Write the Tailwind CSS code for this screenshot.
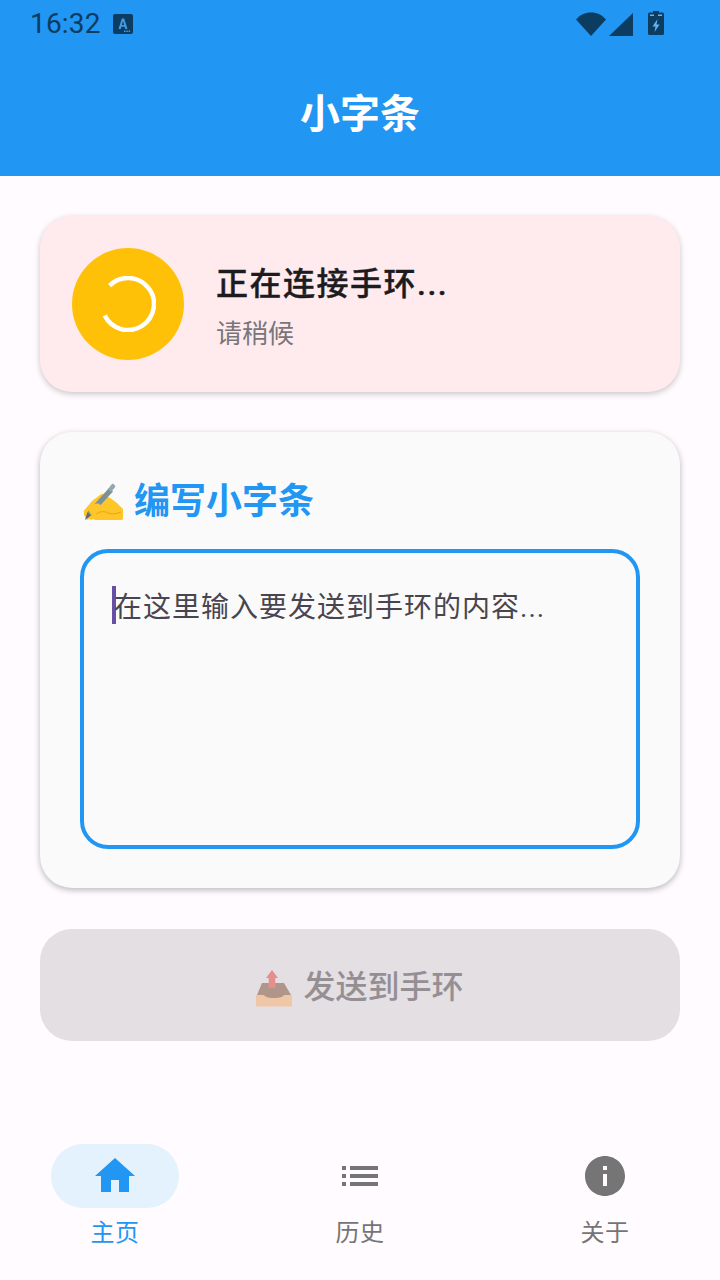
<!DOCTYPE html>
<html lang="zh">
<head>
  <meta charset="UTF-8" />
  <meta name="viewport" content="width=device-width, initial-scale=1.0" />
  <title>小字条</title>
  <script src="https://cdn.jsdelivr.net/npm/@tailwindcss/browser@4"></script>
</head>
<body class="w-[720px] h-[1280px] overflow-hidden flex flex-col bg-[#FFFBFE] font-['Roboto','Noto_Sans_CJK_SC',sans-serif]">
  <!-- app bar -->
  <header class="h-[176px] bg-[#2196F3] flex flex-col shrink-0">
    <div class="h-[48px] flex items-center pl-[30px] pr-[56px] text-[#0D3C61]">
      <span class="text-[28px] leading-[48px] font-['Roboto'] tracking-[0.2px]">16:32</span>
      <svg class="ml-[12px]" width="20" height="20" viewBox="0 0 20 20">
        <rect width="20" height="20" rx="2" fill="#0D3C61"/>
        <path d="M5.500 15 8.800 4.500h2.400L14.500 15h-2.300l-.6-2.200H8.400L7.800 15zM8.900 10.900h2.200L10 7z" fill="#3F9BE4"/>
        <path d="M11 16.500h1.500V18H11zm2.300 0h1.500V18h-1.500zm2.300 0h1.500V18h-1.500z" fill="#3F9BE4"/>
      </svg>
      <div class="ml-auto flex items-center">
        <svg width="30" height="24" viewBox="0 0 30 24"><path d="M0 7.500C4 3 9 .500 15 .500S26 3 30 7.500L15 24z" fill="#0D3C61"/></svg>
        <svg class="ml-[3px]" width="24" height="24" viewBox="0 0 24 24"><path d="M24 1v23H0z" fill="#0D3C61"/></svg>
        <svg class="ml-[15px] -mt-[2px]" width="16" height="24" viewBox="0 0 16 24">
          <path d="M5 0h6v1.500h3.500A1.500 1.500 0 0 1 16 3v19.500a1.500 1.500 0 0 1-1.500 1.500h-13A1.500 1.500 0 0 1 0 22.500V3a1.500 1.500 0 0 1 1.500-1.500H5z" fill="#0D3C61"/>
          <path d="M9.500 8 4.500 15.500h3L6.500 21l5-7.500h-3z" fill="#5FB4F6"/>
          <path d="M2 3.500h4v1.500H2zm8 0h4v1.500h-4z" fill="#5FB4F6"/>
        </svg>
      </div>
    </div>
    <h1 class="h-[80px] mt-[27px] flex items-center justify-center text-white text-[40px] font-bold leading-none">小字条</h1>
  </header>

  <main class="flex-1 px-[40px] pt-[40px] flex flex-col">
    <!-- status card -->
    <section class="h-[176px] shrink-0 rounded-[32px] bg-[#FFEBEE] p-[32px] flex items-center shadow-[0_2px_6px_rgba(0,0,0,0.22)]">
      <div class="w-[112px] h-[112px] rounded-full bg-[#FFC107] flex items-center justify-center">
        <svg width="56" height="56" viewBox="0 0 56 56"><path d="M9.600 9.600A26 26 0 1 1 4.700 39.600" fill="none" stroke="#fff" stroke-width="4.500"/></svg>
      </div>
      <div class="ml-[32px] pt-[5px] flex flex-col">
        <div class="text-[32px] leading-[44px] tracking-[1.5px] font-medium [-webkit-text-stroke:0.4px] text-[#1C1B1F]">正在连接手环...</div>
        <div class="text-[26px] leading-[36px] mt-[10px] text-[#79767A]">请稍候</div>
      </div>
    </section>

    <!-- editor card -->
    <section class="h-[456px] mt-[40px] shrink-0 rounded-[32px] bg-[#FAFAFA] pt-[46px] px-[40px] pb-[39px] flex flex-col shadow-[0_2px_6px_rgba(0,0,0,0.28)]">
      <div class="flex items-center h-[48px]">
        <svg width="44" height="40" viewBox="0 0 44 40" class="ml-[1px]">
          <g transform="translate(2,1)">
            <path d="M.7 28 9 18 19 10.500l9 5 6 4.500 6 6v10l-1 1H12l-2-1-1.500 1L6 36l-2 1-3-5z" fill="#FFC62A"/>
            <path d="M13 31c5-3 8-3 12-1 4 1.500 8 1 13-1" fill="none" stroke="#E8A317" stroke-width="1"/>
            <path d="M4.500 29 26 5l4 3.500L8 32.500z" fill="#7E9097"/>
            <path d="M25 6l3.500-4.500c.7-.8 1.500-.8 2.200-.2l1 .9c.7.700.7 1.500.1 2.200L28 9z" fill="#93A7AF"/>
            <path d="M2 37l2.500-8 3.500 3.500z" fill="#5B6B72"/>
            <path d="M8 23c2-1.500 5-3 8-2.500l3 3.500-5 6-6 1.500-2.500-4z" fill="#FFC62A"/>
          </g>
        </svg>
        <h2 class="ml-[9px] text-[36px] leading-[48px] font-bold text-[#2196F3]">编写小字条</h2>
      </div>
      <div class="mt-[23px] h-[300px] rounded-[28px] border-[4px] border-[#2196F3] pl-[28px] pt-[33px] flex items-start">
        <span class="w-[4px] h-[38px] bg-[#6750A4] shrink-0"></span>
        <span class="-ml-[2px] mt-[3px] text-[28px] leading-[38px] tracking-[1px] text-[#49454F]">在这里输入要发送到手环的内容...</span>
      </div>
    </section>

    <!-- send button -->
    <button class="h-[112px] mt-[41px] shrink-0 rounded-[32px] bg-[#E3DFE3] flex items-center justify-center">
      <svg width="36" height="37" viewBox="0 0 36 37" class="mt-[7px]">
        <path d="M6 13h22l7 12v4H1v-4z" fill="#B0958B"/>
        <path d="M16 0 22 8h-2.700v10h-6.600V8H10z" fill="#E58F8C"/>
        <path d="M0 25h8c1 2 4 3 10 3s9-1 10-3h8v11.500H0z" fill="#EFC6A6"/>
      </svg>
      <span class="ml-[11px] mt-[4px] text-[32px] leading-[44px] font-medium text-[#958F94]">发送到手环</span>
    </button>
  </main>

  <!-- bottom nav -->
  <nav class="h-[160px] shrink-0 px-[51px] pt-[24px] flex justify-between">
    <a class="w-[128px] flex flex-col items-center">
      <span class="w-[128px] h-[64px] rounded-full bg-[#E3F2FD] flex items-center justify-center">
        <svg width="48" height="48" viewBox="0 0 24 24" fill="#2196F3"><path d="M10 20v-6h4v6h5v-8h3L12 3 2 12h3v8z"/></svg>
      </span>
      <span class="mt-[9px] text-[24px] leading-[32px] tracking-[0.5px] text-[#2196F3]">主页</span>
    </a>
    <a class="w-[128px] flex flex-col items-center">
      <span class="w-[128px] h-[64px] flex items-center justify-center">
        <svg width="48" height="48" viewBox="0 0 24 24" fill="#757575"><path d="M3 13h2v-2H3v2zm0 4h2v-2H3v2zm0-8h2V7H3v2zm4 4h14v-2H7v2zm0 4h14v-2H7v2zM7 7v2h14V7H7z"/></svg>
      </span>
      <span class="mt-[9px] text-[24px] leading-[32px] tracking-[0.5px] text-[#757575]">历史</span>
    </a>
    <a class="w-[128px] flex flex-col items-center">
      <span class="w-[128px] h-[64px] flex items-center justify-center">
        <svg width="48" height="48" viewBox="0 0 24 24" fill="#757575"><path d="M12 2C6.480 2 2 6.480 2 12s4.480 10 10 10 10-4.480 10-10S17.520 2 12 2zm1 15h-2v-6h2v6zm0-8h-2V7h2v2z"/></svg>
      </span>
      <span class="mt-[9px] text-[24px] leading-[32px] tracking-[0.5px] text-[#757575]">关于</span>
    </a>
  </nav>
</body>
</html>
